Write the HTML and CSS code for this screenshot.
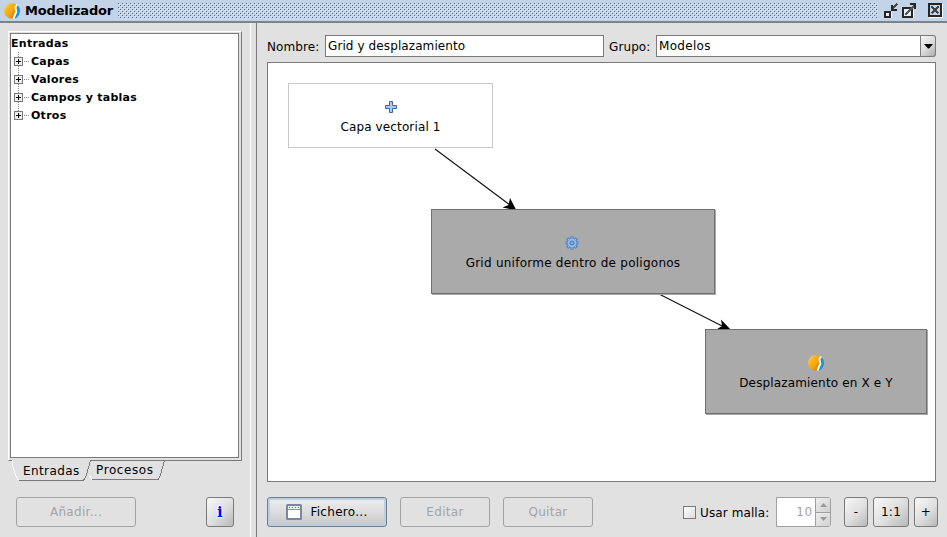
FILE: index.html
```html
<!DOCTYPE html>
<html lang="es">
<head>
<meta charset="utf-8">
<title>Modelizador</title>
<link rel="stylesheet" href="styles.css">
</head>
<body>
<svg width="0" height="0" class="defs">
  <defs>
    <linearGradient id="gold" x1="0" y1="0" x2="1" y2="1"><stop offset="0" stop-color="#ffe08a"/><stop offset=".35" stop-color="#f9b21a"/><stop offset=".6" stop-color="#f2a40f"/><stop offset="1" stop-color="#b86a00"/></linearGradient>
    <symbol id="globe" viewBox="0 0 16 16">
      <path d="M12.500 1.800A7.700 7.700 0 1 0 9 15.500L12 10L12 6Z" fill="url(#gold)"/>
      <path d="M13.500 2Q16 4.500 16 8Q16 13 11 15.800L10.500 15.500L12.500 11L12.500 5Z" fill="#1496dc"/>
      <path d="M13.200 1.600C10.800 4 11.200 5 12 6.500C13.100 9 12.300 9.500 11.200 11L9.500 15.600" fill="none" stroke="#fff" stroke-width="1.800"/>
    </symbol>
  </defs>
</svg>
<div class="window">
  <header class="titlebar">
    <svg class="logo" width="16" height="16"><use href="#globe"/></svg>
    <h1 class="title">Modelizador</h1>
    <svg class="grip" width="761" height="17">
      <defs><pattern id="dots" width="4" height="4" patternUnits="userSpaceOnUse"><path d="M0 0h1v1H0zM2 2h1v1H2z" fill="#5c6b80"/><path d="M1 1h1v1H1zM3 3h1v1H3z" fill="#e0e9f6"/></pattern></defs>
      <rect width="760" height="16" fill="url(#dots)"/>
    </svg>
    <svg class="controls" width="64" height="18" shape-rendering="crispEdges">
      <path d="M3 15.500H9.500V10M21 15.500H31.500V8M47 15.500H60.500V2" fill="none" stroke="#fff"/>
      <rect x="3" y="10" width="5" height="5" fill="#e8eef6" stroke="#262626" stroke-width="2"/>
      <path d="M15 2L10 7" fill="none" stroke="#444" stroke-width="2"/>
      <path d="M9 3h2v4h4v2H9z" fill="#262626"/>
      <rect x="21" y="6" width="9" height="9" fill="#e8eef6" stroke="#262626" stroke-width="2"/>
      <path d="M23 13L33 3" fill="none" stroke="#555" stroke-width="2.400"/>
      <path d="M28 1h6v6h-2V3h-4z" fill="#262626"/>
      <rect x="47" y="2" width="12" height="12" fill="#c3d4e9" stroke="#262626" stroke-width="2"/>
      <path d="M49.500 4.500L56.500 11.500M56.500 4.500L49.500 11.500" fill="none" stroke="#444" stroke-width="2.400"/>
    </svg>
  </header>
  <main class="panes">
    <section class="sidebar">
      <div class="tabpanel">
        <div class="tree">
          <div class="root">Entradas</div>
          <ul class="branches">
            <li><i class="expander"></i><span>Capas</span></li>
            <li><i class="expander"></i><span>Valores</span></li>
            <li><i class="expander"></i><span>Campos y tablas</span></li>
            <li><i class="expander"></i><span>Otros</span></li>
          </ul>
        </div>
      </div>
      <nav class="tabs">
        <svg class="tab-lines" width="160" height="22" shape-rendering="crispEdges">
          <path d="M5 .500H82" stroke="#e1e1e1"/>
          <path d="M4.500 0V5L7.500 15L10.500 20.500" fill="none" stroke="#fff"/>
          <path d="M81 15L83 18L84 19.500" fill="none" stroke="#fff"/>
          <path d="M11 20.500H75.500L78.500 15L82.500 0M84 19.500H150L152.500 15L156.500 0" fill="none" stroke="#7a7a7a"/>
        </svg>
        <span class="tab active">Entradas</span><span class="tab second">Procesos</span>
      </nav>
      <div class="side-actions">
        <button class="btn off add">Añadir...</button>
        <button class="btn info">i</button>
      </div>
    </section>
    <section class="editor">
      <div class="fields">
        <label class="l-name">Nombre:</label><div class="input name">Grid y desplazamiento</div>
        <label class="l-group">Grupo:</label><div class="input combo">Modelos</div><div class="drop"><svg width="9" height="5"><path d="M0 0H9L5 4.500H4Z"/></svg></div>
      </div>
      <div class="canvas">
        <svg class="edges" width="667" height="418">
          <g fill="none" stroke="#111" stroke-width="1.1"><path d="M167 86L246 145M392 231.500L460 266"/></g>
          <path d="M248.500 147.500L234.500 144.500L240.500 142L242 135Z"/>
          <path d="M463 267L448.500 266.500L454 263L453 256.500Z"/>
        </svg>
        <div class="node input-node">
          <svg width="12" height="12"><path d="M4.500.5h3v4h4v3h-4v4h-3v-4h-4v-3h4z" fill="#a9c8ea" stroke="#3264ab"/></svg>
          <span>Capa vectorial 1</span>
        </div>
        <div class="node grid-node">
          <svg width="14" height="14" viewBox="-7 -7 14 14"><path d="M0-6.500V-4M0 4V6.500M-6.500 0H-4M4 0H6.500M-4.800-4.800L-3-3M3 3L4.800 4.800M4.800-4.800L3-3M-3 3L-4.800 4.800" stroke="#3d78cb" stroke-width="3"/><circle r="4.600" fill="#9cc0ee" stroke="#3d78cb" stroke-width=".8"/><path d="M0-5.800V-3M0 3V5.800M-5.800 0H-3M3 0H5.800M-4.300-4.300L4.300 4.300M4.300-4.300L-4.300 4.300" stroke="#9cc0ee" stroke-width="1.200"/><circle r="2" fill="#aaa" stroke="#3d78cb" stroke-width="1.200"/></svg>
          <span>Grid uniforme dentro de poligonos</span>
        </div>
        <div class="node move-node">
          <svg width="16" height="16"><use href="#globe"/></svg>
          <span>Desplazamiento en X e Y</span>
        </div>
      </div>
      <div class="toolbar">
        <button class="btn file"><svg width="16" height="16"><rect x="1" y="1" width="14" height="14" rx=".5" fill="#fff" stroke="#7888a0" stroke-width="2"/><path d="M2 2H14V5H2Z" fill="#e8eef8"/><path d="M3 3.500H14" stroke="#5078b0" stroke-width="1" stroke-dasharray="1 2"/><path d="M2 5.500H14" stroke="#8c9aac"/></svg><span>Fichero...</span></button>
        <button class="btn off edit">Editar</button>
        <button class="btn off quit">Quitar</button>
        <i class="check"></i><label class="l-mesh">Usar malla:</label>
        <div class="spin"><span class="value">10</span><span class="steps"><i><svg width="7" height="4"><path d="M0 4L3.500 0L7 4Z"/></svg></i><i><svg width="7" height="4"><path d="M0 0L3.500 4L7 0Z"/></svg></i></span></div>
        <button class="btn minus">-</button>
        <button class="btn one">1:1</button>
        <button class="btn plus">+</button>
      </div>
    </section>
  </main>
</div>
</body>
</html>
```

FILE: styles.css
```css
* { box-sizing: border-box; }
body { margin: 0; background: #e1e1e1; color: #000; font: 12px/18px "DejaVu Sans", sans-serif; letter-spacing: .1px; overflow: hidden; }
svg { display: block; flex: none; }
.defs { position: absolute; }
.window { width: 947px; height: 537px; display: flex; flex-direction: column; }
.titlebar { height: 23px; flex: none; display: flex; background: #c3d4e9; border-bottom: 2px solid #7c8289; padding-left: 4px; }
.logo { margin-top: 3px; }
.title { margin: 0 0 0 5px; width: 93px; font-size: 13px; line-height: 21px; font-weight: bold; letter-spacing: -.17px; white-space: nowrap; }
.grip { margin-top: 3px; }
.controls { margin: 2px 0 0 3px; }
.panes { flex: 1; display: flex; min-height: 0; }
.sidebar { width: 251px; padding: 8px 8px 0; border-right: 1px solid #fff; }
.tabpanel { width: 234px; height: 430px; padding: 1px 2px 2px 1px; border: 1px solid #fff; border-right-color: #7a7a7a; border-bottom-color: #7a7a7a; }
.tree { width: 229px; height: 425px; background: #fff; border: 1px solid #7a7a7a; font-weight: bold; font-size: 11px; letter-spacing: .27px; }
.root { height: 18px; line-height: 20px; }
.branches { margin: 0; padding: 0 0 0 3px; list-style: none; background: repeating-linear-gradient(#888 0 1px, transparent 1px 2px) 7px 0 / 1px 62px no-repeat; }
.branches li { height: 18px; line-height: 20px; display: flex; align-items: center; }
.expander { width: 9px; height: 9px; margin-right: 8px; border: 1px solid #777; background: linear-gradient(#000,#000) center / 5px 1px no-repeat, linear-gradient(#000,#000) center / 1px 5px no-repeat, #eee; }
.branches span { position: relative; padding-top: 2px; }
.branches span::before { content: ""; position: absolute; left: -7px; top: 11px; width: 6px; height: 1px; background: repeating-linear-gradient(90deg, #888 0 1px, transparent 1px 2px); }
.tabs { position: relative; height: 20px; margin-top: -1px; display: flex; padding-left: 15px; }
.tab-lines { position: absolute; left: 0; top: 0; }
.tab { position: relative; line-height: 21px; width: 73px; letter-spacing: .4px; }
.tab.second { letter-spacing: .6px; }
.tab.active { line-height: 23px; }
.side-actions { display: flex; justify-content: space-between; padding: 17px 8px 0; }
.btn { height: 30px; padding: 0; font: inherit; letter-spacing: .3px; color: #000; border: 1px solid #7a7a7a; border-radius: 3px; background: linear-gradient(135deg, #f8f8f8, #dedede 55%, #b8b8b8); display: flex; align-items: center; justify-content: center; flex: none; }
.btn.off { background: none; border-color: #a3a3a3; color: #a3a3a3; }
.add { width: 120px; }
.info { width: 28px; color: #00f; font: bold 15px "DejaVu Serif", serif; text-shadow: 1px 0 #fff, -1px 0 #fff, 0 1px #fff, 0 -1px #fff; }
.editor { width: 691px; margin-left: 5px; padding: 12px 11px 0 10px; border-left: 1px solid #7a7a7a; }
.fields { display: flex; height: 22px; line-height: 22px; white-space: nowrap; }
.l-name { width: 58px; flex: none; line-height: 24px; }
.input { height: 22px; line-height: 20px; border: 1px solid #7a7a7a; background: #fff; padding-left: 2px; flex: none; }
.name { width: 279px; }
.l-group { width: 47px; padding-left: 5px; margin-right: 5px; flex: none; line-height: 24px; }
.combo { width: 265px; letter-spacing: .3px; }
.drop { width: 15px; height: 22px; border: 1px solid #7a7a7a; border-left: 0; border-radius: 0 3px 3px 0; background: linear-gradient(135deg, #f5f5f5, #ddd 50%, #aaa); display: flex; align-items: center; justify-content: center; }
.canvas { position: relative; width: 669px; height: 420px; margin-top: 5px; background: #fff; border: 1px solid #7a7a7a; }
.edges { position: absolute; left: 0; top: 0; }
.node { position: absolute; display: flex; flex-direction: column; align-items: center; white-space: nowrap; border: 1px solid #707070; background: #aaa; }
.node span { line-height: 18px; }
.input-node { left: 20px; top: 20px; width: 205px; height: 65px; padding-top: 17px; background: #fff; border-color: #c8c8c8; letter-spacing: .13px; }
.input-node span { margin-top: 5px; }
.grid-node { left: 163px; top: 146px; width: 284px; height: 85px; padding-top: 26px; box-shadow: 1px 1px #a8a8a8; letter-spacing: .25px; }
.grid-node svg { margin-left: -2px; }
.grid-node span { margin-top: 4px; }
.move-node { left: 437px; top: 266px; width: 222px; height: 85px; padding-top: 25px; box-shadow: 1px 1px #a8a8a8; letter-spacing: .15px; }
.move-node span { margin-top: 3px; }
.toolbar { display: flex; margin-top: 15px; height: 30px; align-items: center; }
.file { width: 120px; border-color: #737b85; background: linear-gradient(#f0f0f0, #c8c8c8); box-shadow: inset 0 0 0 2px #b8cfe5; gap: 8px; }
.edit { width: 90px; margin-left: 13px; }
.quit { width: 90px; margin-left: 13px; }
.check { width: 13px; height: 13px; flex: none; margin: 1px 4px 0 90px; border: 1px solid #7a7a7a; background: linear-gradient(135deg, #fff, #ddd); }
.l-mesh { width: 76px; flex: none; padding-top: 2px; white-space: nowrap; }
.spin { display: flex; width: 55px; height: 30px; border: 1px solid #a0a0a0; border-radius: 0 3px 3px 0; background: #fff; color: #a3a3a3; flex: none; }
.value { width: 39px; line-height: 29px; text-align: right; padding-right: 2px; letter-spacing: .8px; border-right: 1px solid #a0a0a0; }
.steps { flex: 1; display: flex; flex-direction: column; }
.steps i { flex: 1; display: flex; align-items: center; justify-content: center; background: linear-gradient(135deg, #eee, #d0d0d0); fill: #999; }
.steps i + i { border-top: 1px solid #a0a0a0; }
.minus { width: 24px; margin-left: 13px; }
.one { width: 36px; margin-left: 5px; }
.plus { width: 24px; margin-left: 5px; }
```
